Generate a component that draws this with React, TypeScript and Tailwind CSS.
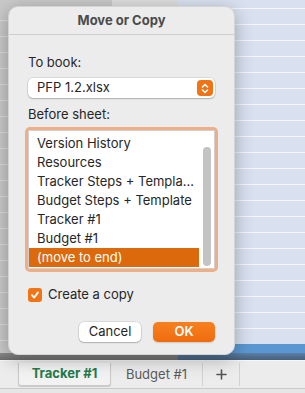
import React from 'react';

const font = { fontFamily: 'Inter, "Noto Sans", sans-serif' };

export default function App() {
  const sheets = ['Instructions (Read Me)', 'Version History', 'Resources', 'Tracker Steps + Templa…', 'Budget Steps + Template', 'Tracker #1', 'Budget #1'];
  const gridRows = Array.from({ length: 22 });

  return (
    <div className="w-[305px] h-[393px] overflow-hidden flex flex-col bg-[#ececec]" style={font}>
      {/* dimmed spreadsheet behind the sheet */}
      <div className="relative h-[360px] flex flex-col">
        <div className="flex h-[353px]">
          <div className="w-[112px] bg-[#c9c9c9] flex flex-col pt-[5px]">
            {gridRows.map((_, i) => (
              <div key={i} className="h-4 shrink-0 border-b border-[#dcdcdc]" />
            ))}
          </div>
          <div className="w-[66px] bg-[#dedede] flex flex-col pt-[5px]">
            {gridRows.map((_, i) => (
              <div key={i} className="h-4 shrink-0 border-b border-[#e8e8e8]" />
            ))}
          </div>
          <div className="flex-1 flex flex-col">
            <div className="h-[344px] bg-[#d9e1f0] flex flex-col pt-[8px] overflow-hidden">
              {gridRows.map((_, i) => (
                <div key={i} className="h-4 shrink-0 border-t border-[#f4f6fa]" />
              ))}
            </div>
            <div className="h-[9px] bg-[#5a97d2]" />
          </div>
        </div>
        <div className="flex h-[7px]">
          <div className="w-[178px] bg-gradient-to-b from-[#8c8c8c] to-[#6e6e6e]" />
          <div className="flex-1 bg-gradient-to-b from-[#5a7fa6] to-[#46607c]" />
        </div>

        {/* Move or Copy sheet */}
        <div className="absolute left-[8px] top-[6px] w-[227px] h-[349px] rounded-[10px] bg-[#ececec] border border-[#d4d4d4] shadow-[0_4px_18px_rgba(0,0,0,0.3)] flex flex-col">
          <div className="h-[28px] shrink-0 border-b border-[#cfcfcf] flex items-center justify-center text-[13px] font-bold text-[#4b4b4b]">
            Move or Copy
          </div>
          <div className="flex flex-col px-[19px] pt-[19px] text-[13px] text-[#262626]">
            <div className="h-4 leading-4">To book:</div>
            <div className="mt-2 h-5 rounded-[5px] bg-white shadow-[0_0_0_0.5px_rgba(0,0,0,0.15),0_1px_1.5px_rgba(0,0,0,0.2)] flex items-center justify-between pl-[9px] pr-[2px]">
              <span>PFP 1.2.xlsx</span>
              <div className="w-4 h-4 rounded-[4px] bg-[#f07416] flex items-center justify-center">
                <svg width="8" height="11" viewBox="0 0 8 11" fill="none" stroke="white" strokeWidth="1.6" strokeLinecap="round" strokeLinejoin="round">
                  <path d="M1.5 4 L4 1.5 L6.5 4" />
                  <path d="M1.5 7 L4 9.5 L6.5 7" />
                </svg>
              </div>
            </div>
            <div className="mt-2 h-4 leading-4">Before sheet:</div>
            <div className="mt-[5px] -mx-[3px] h-[145px] rounded-[5px] bg-[#eeae88] p-[3px]">
              <div className="h-full bg-white border border-[#d0d0d0] flex overflow-hidden">
                <div className="flex-1 overflow-hidden">
                  <div className="-mt-[16px]">
                    {sheets.map((s) => (
                      <div key={s} className="h-[19px] leading-[19px] pl-[8px] whitespace-nowrap">{s}</div>
                    ))}
                    <div className="h-[19px] leading-[19px] pl-[8px] bg-[#dc6a0c] text-white">(move to end)</div>
                  </div>
                </div>
                <div className="w-[15px] flex justify-center pt-[16px] pb-[2px]">
                  <div className="w-[8px] h-full rounded-full bg-[#c3c3c3]" />
                </div>
              </div>
            </div>
            <div className="mt-[13px] flex items-center gap-[6px]">
              <div className="w-[14px] h-[14px] rounded-[3px] bg-[#f07416] flex items-center justify-center">
                <svg width="10" height="10" viewBox="0 0 10 10" fill="none" stroke="white" strokeWidth="1.8" strokeLinecap="round" strokeLinejoin="round">
                  <path d="M2 5.2 L4.1 7.6 L8 2.4" />
                </svg>
              </div>
              <span>Create a copy</span>
            </div>
            <div className="mt-[17px] flex justify-end gap-3">
              <button className="w-[62px] h-5 rounded-[5px] bg-white text-[13px] text-[#262626] shadow-[0_0_0_0.5px_rgba(0,0,0,0.15),0_1px_1.5px_rgba(0,0,0,0.2)]">
                Cancel
              </button>
              <button className="w-[62px] h-5 rounded-[5px] bg-gradient-to-b from-[#f7801f] to-[#f06c0e] text-[13px] font-semibold text-white shadow-[0_1px_1.5px_rgba(0,0,0,0.15)]">
                OK
              </button>
            </div>
          </div>
        </div>
      </div>

      {/* sheet tabs */}
      <div className="h-[33px] border-t border-[#f7f7f7] bg-[#ececec] flex flex-col">
        <div className="h-[27px] flex items-stretch pt-[2px]">
          <div className="w-[18px] shrink-0" />
          <div className="w-[93px] h-[23px] bg-[#f2f2f2] border border-[#c9c9c9] border-t-0 rounded-b-[3px] shadow-[0_1px_1px_rgba(0,0,0,0.15)] flex items-center justify-center text-[13px] font-bold text-[#237a4a]">
            Tracker #1
          </div>
          <div className="w-[92px] h-[23px] border-r border-[#d2d2d2] flex items-center justify-center text-[13px] text-[#5a5a5a]">
            Budget #1
          </div>
          <div className="w-[37px] h-[23px] border-r border-[#d2d2d2] flex items-center justify-center">
            <svg width="11" height="11" viewBox="0 0 11 11" stroke="#555" strokeWidth="1.6" strokeLinecap="round">
              <path d="M5.5 1 V10 M1 5.5 H10" />
            </svg>
          </div>
        </div>
        <div className="flex-1 border-t border-[#cacaca] bg-[#e6e6e6]" />
      </div>
    </div>
  );
}
